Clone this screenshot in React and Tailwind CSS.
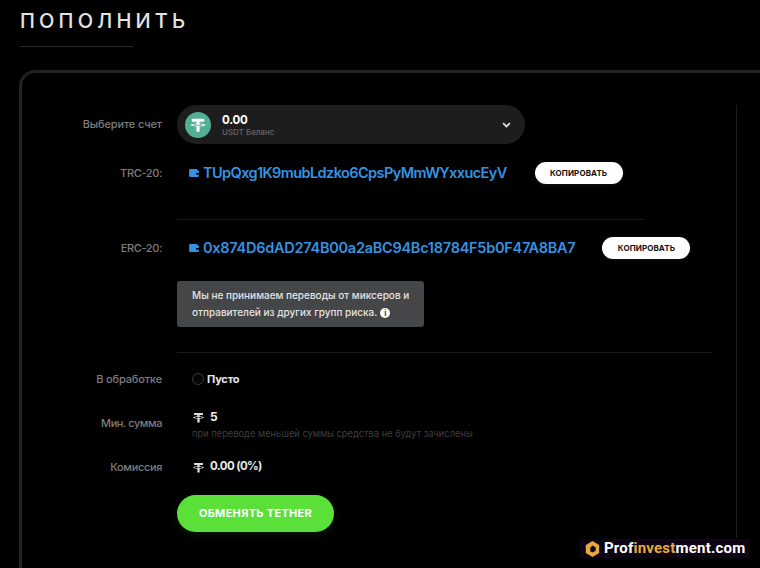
import React from "react";

const F = { fontFamily: '"Inter", "Liberation Sans", sans-serif' };

function TetherMark({ className }) {
  return (
    <svg viewBox="0 0 16 16" className={className} fill="currentColor">
      <path d="M2.5 2.5H13.5V5H9.4V6.6C12.2 6.75 14.6 7.3 14.6 8C14.6 8.7 12.2 9.25 9.4 9.4V14H6.6V9.4C3.8 9.25 1.4 8.7 1.4 8C1.4 7.3 3.8 6.75 6.6 6.6V5H2.5V2.5ZM6.6 7.3C4.6 7.4 3 7.7 3 8C3 8.35 5.2 8.7 8 8.7C10.8 8.7 13 8.35 13 8C13 7.7 11.4 7.4 9.4 7.3V8.1H6.6V7.3Z" />
    </svg>
  );
}

function WalletIcon() {
  return (
    <svg viewBox="0 0 11 9" className="ml-[1px] w-[10px] h-[8px] shrink-0 text-[#3593e0]" fill="currentColor">
      <path d="M1.5 0H9V1.5H10C10.5 1.5 11 2 11 2.5V8C11 8.5 10.5 9 10 9H1.2C.5 9 0 8.5 0 8V1.5C0 .7.7 0 1.5 0ZM8.6 4.4A1 1 0 1 0 8.6 6.4H11V4.4H8.6Z" />
    </svg>
  );
}

function Label({ children, className = "tracking-[-0.15px]" }) {
  return <div className={`w-[140px] shrink-0 text-right text-[11px] font-medium text-[#7d7d7d] ${className}`}>{children}</div>;
}

function Address({ label, value, buttonGap, tracking }) {
  return (
    <div className="flex items-center">
      <Label className="tracking-[-0.35px]">{label}</Label>
      <div className="ml-[26px] flex items-center gap-[4px]">
        <WalletIcon />
        <span className={`text-[14.5px] font-semibold text-[#3593e0] leading-none whitespace-nowrap ${tracking}`}>{value}</span>
      </div>
      <button className={`${buttonGap} h-[22px] w-[88px] rounded-full bg-white text-[8px] font-bold text-[#111] tracking-[0.1px] shadow-[0_1px_4px_rgba(255,255,255,0.08)]`}>
        КОПИРОВАТЬ
      </button>
    </div>
  );
}

export default function App() {
  return (
    <div className="relative w-[760px] h-[568px] overflow-hidden bg-black" style={F}>
      <div className="pl-5 pt-[9px]">
        <h1 className="text-[20px] leading-[24px] font-medium tracking-[4.2px] text-[#e4e4e4]">ПОПОЛНИТЬ</h1>
        <div className="mt-[13px] h-px w-[113px] bg-[#2a2a2a]" />
      </div>

      <div className="ml-[19px] mt-[23px] w-[800px] h-[520px] rounded-tl-[16px] border-l-[3px] border-t-[3px] border-[#222222] pt-[32px]">
        <div className="w-[715px] h-[433px] border-r border-[#1e1e1e]">
          <div className="flex items-center">
            <Label>Выберите счет</Label>
            <div className="ml-[15px] w-[348px] h-[39px] rounded-full bg-[#1d1d1d] flex items-center pl-2 pr-[14px]">
              <div className="w-[26px] h-[26px] rounded-full bg-[#53ae94] flex items-center justify-center text-white">
                <TetherMark className="w-[18px] h-[18px]" />
              </div>
              <div className="ml-[11px] flex-1">
                <div className="text-[11.5px] leading-[14px] font-bold text-white tracking-[-0.2px]">0.00</div>
                <div className="text-[8px] leading-[10px] font-medium text-[#666]">USDT Баланс</div>
              </div>
              <svg viewBox="0 0 10 7" className="w-[9px] h-[6px] text-[#ddd]" fill="none" stroke="currentColor" strokeWidth="2">
                <path d="M1 1.2 5 5.2 9 1.2" />
              </svg>
            </div>
          </div>

          <div className="mt-[18px]">
            <Address label="TRC-20:" value="TUpQxg1K9mubLdzko6CpsPyMmWYxxucEyV" buttonGap="ml-[28px]" tracking="tracking-[-0.59px]" />
          </div>

          <div className="ml-[155px] mt-[35px] w-[467px] h-px bg-[#1a1a1a]" />

          <div className="mt-[17px]">
            <Address label="ERC-20:" value="0x874D6dAD274B00a2aBC94Bc18784F5b0F47A8BA7" buttonGap="ml-[27px]" tracking="tracking-[-0.26px]" />
          </div>

          <div className="ml-[155px] mt-[22px] w-[247px] h-[46px] rounded-[3px] bg-[#444648] px-[15px] py-[6px] text-[10px] leading-[17px] font-medium text-[#e4e4e4]">
            <div className="whitespace-nowrap">Мы не принимаем переводы от миксеров и</div>
            <div className="whitespace-nowrap flex items-center gap-[3px]">
              отправителей из других групп риска.
              <span className="inline-flex w-[10px] h-[10px] rounded-full bg-white text-[#444648] text-[8px] font-bold items-center justify-center leading-none">i</span>
            </div>
          </div>

          <div className="ml-[155px] mt-[25px] w-[535px] h-px bg-[#1c1c1c]" />

          <div className="mt-[19px] flex items-center h-[14px]">
            <Label>В обработке</Label>
            <div className="ml-[30px] w-[12px] h-[12px] rounded-full border border-[#3a3a3a] bg-[#050505]" />
            <span className="ml-[3px] text-[11px] font-bold text-[#e8e8e8] tracking-[-0.2px]">Пусто</span>
          </div>

          <div className="mt-[23px] flex">
            <Label className="pt-[6px] tracking-[-0.45px]">Мин. сумма</Label>
            <div className="ml-[30px]">
              <div className="flex items-center h-[16px] text-[#ddd]">
                <TetherMark className="w-[13px] h-[13px]" />
                <span className="ml-[5px] text-[12px] font-bold text-[#eee]">5</span>
              </div>
              <div className="mt-[3px] text-[9.3px] leading-[12px] text-[#3f3f3f] whitespace-nowrap">при переводе меньшей суммы средства не будут зачислены</div>
            </div>
          </div>

          <div className="mt-[19px] flex items-center h-[16px]">
            <Label className="tracking-[-0.35px]">Комиссия</Label>
            <div className="ml-[30px] flex items-center text-[#ddd]">
              <TetherMark className="w-[13px] h-[13px]" />
              <span className="ml-[5px] text-[11.5px] font-bold text-[#e8e8e8] tracking-[-0.6px]">0.00 (0%)</span>
            </div>
          </div>

          <button className="ml-[155px] mt-[20px] w-[157px] h-[37px] rounded-full bg-[#5be03a] text-[11px] font-bold text-white tracking-[0.3px] shadow-[0_3px_10px_rgba(91,224,58,0.1)]">
            ОБМЕНЯТЬ TETHER
          </button>
        </div>
      </div>

      <div className="absolute right-[10px] bottom-[10px] w-[170px] h-[19px] bg-[#0d0414] flex items-center pl-[5px]">
        <svg viewBox="0 0 16 18" className="w-[15px] h-[16px] shrink-0">
          <path d="M8 0 15.5 4.5V13.5L8 18 .5 13.5V4.5Z" fill="#e9a93a" />
          <path d="M8 5 11.5 7V11L8 13 5.5 11.5V7.5Z" fill="#0d0414" />
        </svg>
        <span className="ml-[4px] text-[15px] font-bold leading-none tracking-[0.2px] text-white whitespace-nowrap" style={{ fontFamily: '"Roboto", sans-serif' }}>
          Prof<span className="text-[#e9a93a]">invest</span>ment.com
        </span>
      </div>
    </div>
  );
}
